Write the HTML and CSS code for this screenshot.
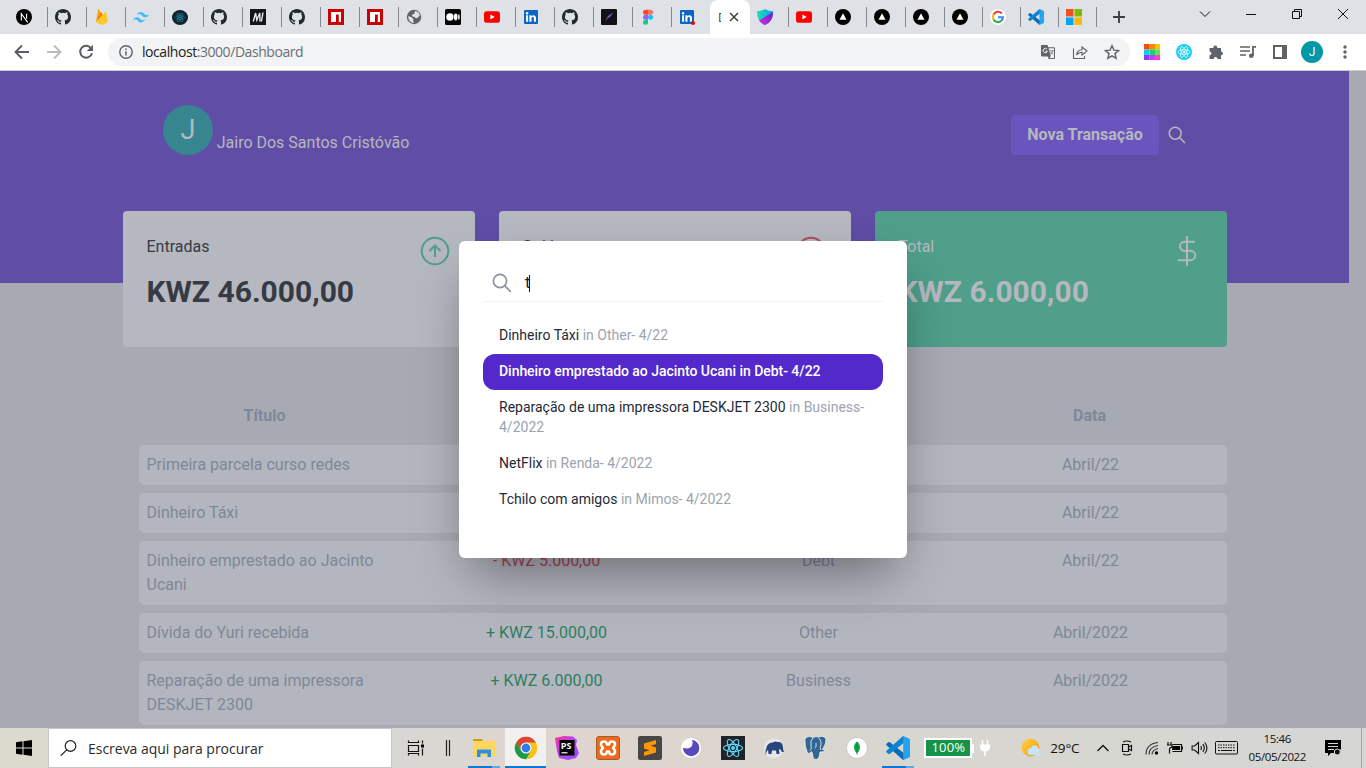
FILE: index.html
```html
<!DOCTYPE html>
<html lang="pt">
<head>
<meta charset="utf-8">
<title>Dashboard</title>
<link rel="stylesheet" href="styles.css">
</head>
<body>
<svg class="defs" width="0" height="0">
  <defs>
    <linearGradient id="shieldA" x1="0" y1="0" x2="1" y2="0"><stop offset="0" stop-color="#17e0b0"/><stop offset="1" stop-color="#1b9cf5"/></linearGradient>
    <linearGradient id="shieldB" x1="0" y1="1" x2="1" y2="0"><stop offset="0" stop-color="#e12be0"/><stop offset="1" stop-color="#5a1fc9"/></linearGradient>
    <linearGradient id="psG" x1="0" y1="0" x2="1" y2="1"><stop offset="0" stop-color="#ff318c"/><stop offset=".45" stop-color="#b345f1"/><stop offset="1" stop-color="#9a4df5"/></linearGradient>
    <linearGradient id="sunG" x1="0" y1="0" x2="1" y2="1"><stop offset="0" stop-color="#ffd23c"/><stop offset="1" stop-color="#f49a1d"/></linearGradient>
  </defs>
  <symbol id="next" viewBox="0 0 16 16"><circle cx="8" cy="8" r="8"/><path d="M5.3 11.5V4.7l6.4 8.6M10.6 4.7v5" fill="none" stroke="#fff" stroke-width="1.1"/></symbol>
  <symbol id="github" viewBox="0 0 16 16"><path fill="#24292f" d="M8 0C3.58 0 0 3.58 0 8c0 3.54 2.29 6.53 5.47 7.59.4.07.55-.17.55-.38 0-.19-.01-.82-.01-1.49-2.01.37-2.53-.49-2.69-.94-.09-.23-.48-.94-.82-1.13-.28-.15-.68-.52-.01-.53.63-.01 1.08.58 1.23.82.72 1.21 1.87.87 2.33.66.07-.52.28-.87.51-1.07-1.78-.2-3.64-.89-3.64-3.95 0-.87.31-1.59.82-2.15-.08-.2-.36-1.02.08-2.12 0 0 .67-.21 2.2.82a7.6 7.6 0 0 1 4 0c1.53-1.04 2.2-.82 2.2-.82.44 1.1.16 1.92.08 2.12.51.56.82 1.27.82 2.15 0 3.07-1.87 3.75-3.65 3.95.29.25.54.73.54 1.48 0 1.07-.01 1.93-.01 2.2 0 .21.15.46.55.38A8.01 8.01 0 0 0 16 8c0-4.42-3.58-8-8-8z"/></symbol>
  <symbol id="firebase" viewBox="0 0 16 16"><path fill="#ffa000" d="M2 13 4.2.3c.1-.4.5-.4.7-.1L7.3 4.600z"/><path fill="#f57c00" d="m2 13 7-6.500L7.400 3.400c-.2-.3-.5-.3-.6 0z"/><path fill="#ffca28" d="M14 13 12.300 2.900c-.1-.3-.4-.4-.6-.2L2 13l5.500 2.900c.3.1.7.1 1 0z"/></symbol>
  <symbol id="tailwind" viewBox="0 0 16 16"><path fill="#38bdf8" d="M8 3Q4.800 3 4 6.300q1.200-1.600 2.800-1.200c.9.2 1.500.9 2.300 1.600Q10.400 8.200 12 8.200q3.200 0 4-3.300-1.200 1.600-2.800 1.200c-.9-.2-1.500-.9-2.300-1.600Q9.700 3 8 3zM4 8.200q-3.200 0-4 3.300 1.200-1.600 2.800-1.200c.9.2 1.500.9 2.300 1.600 1.100 1.200 1.900 1.500 2.900 1.500q3.200 0 4-3.300-1.200 1.600-2.800 1.200c-.9-.2-1.500-.9-2.300-1.600Q5.700 8.200 4 8.200z"/></symbol>
  <symbol id="atom" viewBox="-12 -12 24 24"><circle r="2.100" fill="currentColor"/><g fill="none" stroke="currentColor" stroke-width="1.200"><ellipse rx="10.500" ry="4"/><ellipse rx="10.500" ry="4" transform="rotate(60)"/><ellipse rx="10.500" ry="4" transform="rotate(120)"/></g></symbol>
  <symbol id="mtab" viewBox="0 0 16 16"><rect width="16" height="16" fill="#15151c"/><path d="M3.300 12.500 5.600 4l1.200 7L9.800 4l.2 8.500M13 3.500l-1.600 9" fill="none" stroke="#e8e8ee" stroke-width="1.400"/></symbol>
  <symbol id="npm" viewBox="0 0 16 16"><path fill="#cb0000" d="M0 0h16v16H0z"/><path fill="#fff" d="M3 3h10v10h-2.200V5.500H8V13H3z"/></symbol>
  <symbol id="globe" viewBox="0 0 16 16"><circle cx="8" cy="8" r="7.200" fill="#5f6368"/><path fill="#dee1e6" d="M2.300 7 5.500 8.200l2 1.800-.5 1.500 1 2.500C4.500 14 2 11 2.300 7zM9 2.100c2.500.3 4.300 1.800 4.900 4.200L12 8.500 10 9.500 8.500 8 6 7.200 6.200 5.500l2-.5z"/></symbol>
  <symbol id="medium" viewBox="0 0 16 16"><rect width="16" height="16" rx="1.500"/><g fill="#fff"><circle cx="4.900" cy="8" r="3.700"/><ellipse cx="10.700" cy="8" rx="1.800" ry="3.400"/><ellipse cx="13.900" cy="8" rx=".8" ry="3"/></g></symbol>
  <symbol id="youtube" viewBox="0 0 16 16"><rect y="2.300" width="16" height="11.400" rx="2.800" fill="#f00"/><path fill="#fff" d="M6.400 5.600v4.800L10.600 8z"/></symbol>
  <symbol id="linkedin" viewBox="0 0 16 16"><rect x="1" y="1" width="14" height="14" rx="1" fill="#0a66c2"/><path fill="#fff" d="M3.100 6.300h2v6.500h-2zM6.400 6.300h2v.9c1.100-1.700 4.600-1.400 4.600 1.700v3.900h-2.100V9.400c0-1.900-2.400-1.800-2.400 0v3.400H6.400z"/><circle cx="4.100" cy="4.200" r="1.200" fill="#fff"/></symbol>
  <symbol id="quill" viewBox="0 0 16 16"><rect width="16" height="16" rx="1" fill="#121214"/><path d="m4 13 3-6 5-3.500-2.500 4L7 9z" fill="#8257e5"/></symbol>
  <symbol id="figma" viewBox="0 0 16 16"><path fill="#f24e1e" d="M8 .8H5.500a2.500 2.500 0 0 0 0 5H8z"/><path fill="#ff7262" d="M8 .8h2.500a2.500 2.500 0 0 1 0 5H8z"/><path fill="#a259ff" d="M8 5.800H5.500a2.500 2.500 0 0 0 0 5H8z"/><circle cx="10.500" cy="8.300" r="2.500" fill="#1abcfe"/><path fill="#0acf83" d="M8 10.800H5.500A2.500 2.500 0 1 0 8 13.300z"/></symbol>
  <symbol id="shield" viewBox="0 0 16 16"><path fill="url(#shieldA)" d="M8 0q4 2.300 8 2.300Q16 13 8 16 0 13 0 2.300 4 2.300 8 0z"/><path fill="url(#shieldB)" d="M16 3q0 10-8 13-4-1.500-6-4.500z"/></symbol>
  <symbol id="vercel" viewBox="0 0 16 16"><circle cx="8" cy="8" r="8"/><path fill="#fff" d="m8 4.300 3.500 6.400h-7z"/></symbol>
  <symbol id="google" viewBox="0 0 16 16"><circle cx="8" cy="8" r="8" fill="#fff"/><g fill="none" stroke-width="2.100"><path stroke="#ea4335" d="M3.500 5.600a5 5 0 0 1 8.300-1.100"/><path stroke="#fbbc05" d="M3.500 10.400a5 5 0 0 1 0-4.800"/><path stroke="#34a853" d="M11.200 11.900a5 5 0 0 1-7.700-1.500"/><path stroke="#4285f4" d="M8 8.200h5a5 5 0 0 1-1.800 3.700"/></g></symbol>
  <symbol id="vscode" viewBox="0 0 24 24"><path fill="#0a6cb8" d="M.5 7.800 2.300 6.300q.8-.5 1.600 0L18 17.200V24q-.8 0-1.500-.6L.5 9.200q-.7-.7 0-1.400z"/><path fill="#0b84d2" d="M.5 16.200 2.300 17.700q.8.500 1.600 0L18 6.800V0q-.8 0-1.500.6L.5 14.800q-.7.700 0 1.400z"/><path fill="#27a3ee" d="m17.500 0 5.500 2.500q1 .5 1 1.500v16q0 1-1 1.500L17.500 24q-.8 0-.3-2V2q-.5-2 .3-2z"/></symbol>
  <symbol id="mslogo" viewBox="0 0 15 15"><path fill="#f25022" d="M0 0h7v7H0z"/><path fill="#7fba00" d="M8 0h7v7H8z"/><path fill="#00a4ef" d="M0 8h7v7H0z"/><path fill="#ffb900" d="M8 8h7v7H8z"/></symbol>
  <symbol id="lens" viewBox="0 0 20 20"><g fill="none" stroke="currentColor" stroke-width="1.700"><circle cx="8" cy="8" r="6.600"/><path d="m12.800 12.800 6 6"/></g></symbol>
</svg>

<header class="browser">
  <div class="tabstrip">
    <div class="tab"><svg><use href="#next"/></svg></div>
    <div class="tab"><svg><use href="#github"/></svg></div>
    <div class="tab"><svg><use href="#firebase"/></svg></div>
    <div class="tab"><svg><use href="#tailwind"/></svg></div>
    <div class="tab"><svg class="react-dark"><use href="#atom"/></svg></div>
    <div class="tab"><svg><use href="#github"/></svg></div>
    <div class="tab"><svg><use href="#mtab"/></svg></div>
    <div class="tab"><svg><use href="#github"/></svg></div>
    <div class="tab"><svg><use href="#npm"/></svg></div>
    <div class="tab"><svg><use href="#npm"/></svg></div>
    <div class="tab"><svg><use href="#globe"/></svg></div>
    <div class="tab"><svg><use href="#medium"/></svg></div>
    <div class="tab"><svg><use href="#youtube"/></svg></div>
    <div class="tab"><svg><use href="#linkedin"/></svg></div>
    <div class="tab"><svg><use href="#github"/></svg></div>
    <div class="tab"><svg><use href="#quill"/></svg></div>
    <div class="tab"><svg><use href="#figma"/></svg></div>
    <div class="tab tab-last"><svg><use href="#linkedin"/></svg><i class="dot"></i></div>
    <div class="tab-active"><span class="tab-title">D</span><svg viewBox="0 0 10 10" width="10" height="10"><path d="m1 1 8 8M9 1 1 9" stroke="#3c4043" stroke-width="1.500"/></svg></div>
    <div class="tab"><svg><use href="#shield"/></svg></div>
    <div class="tab"><svg><use href="#youtube"/></svg></div>
    <div class="tab"><svg><use href="#vercel"/></svg></div>
    <div class="tab"><svg><use href="#vercel"/></svg></div>
    <div class="tab"><svg><use href="#vercel"/></svg></div>
    <div class="tab tab-narrow"><svg><use href="#vercel"/></svg></div>
    <div class="tab tab-narrow"><svg><use href="#google"/></svg></div>
    <div class="tab tab-narrow"><svg><use href="#vscode"/></svg></div>
    <div class="tab tab-narrow"><svg><use href="#mslogo"/></svg></div>
    <svg class="plus" viewBox="0 0 12 12"><path d="M6 0v12M0 6h12" stroke="#3c4043" stroke-width="1.900"/></svg>
    <div class="winctl">
      <svg viewBox="0 0 12 12"><path d="m1 3.500 5 5 5-5" fill="none" stroke="#111"/></svg>
      <svg viewBox="0 0 12 12"><path d="M1 6.500h10" stroke="#111"/></svg>
      <svg viewBox="0 0 12 12"><path d="M1.500 3.500h7v7h-7zM3.500 3.500v-2h7v7h-2" fill="none" stroke="#111"/></svg>
      <svg viewBox="0 0 12 12"><path d="m1 1 10 10M11 1 1 11" stroke="#111"/></svg>
    </div>
  </div>
  <div class="toolbar">
    <div class="nav">
      <svg viewBox="0 0 16 16"><path d="M15 8H2M8 1.500 1.500 8 8 14.500" fill="none" stroke="#5a5e63" stroke-width="1.900"/></svg>
      <svg viewBox="0 0 16 16"><path d="M1 8h13M8 1.500 14.500 8 8 14.500" fill="none" stroke="#babcbe" stroke-width="1.900"/></svg>
      <svg viewBox="0 0 16 16"><path d="M13.200 4.400A6 6 0 1 0 14 9.200" fill="none" stroke="#5a5e63" stroke-width="2"/><path fill="#5a5e63" d="M15 .8v6.200H8.800z"/></svg>
    </div>
    <div class="omnibox">
      <svg class="info" viewBox="0 0 14 14"><circle cx="7" cy="7" r="6.200" fill="none" stroke="#5f6368" stroke-width="1.400"/><path d="M7 6.200v4.300M7 3.500V5" stroke="#5f6368" stroke-width="1.500"/></svg>
      <span class="url"><b>localhost</b>:3000/Dashboard</span>
      <svg viewBox="0 0 16 16"><path fill="#5f6368" d="M1.500 1h6l.7 2.200h5.600q1.200 0 1.200 1.200v9.400q0 1.200-1.200 1.200H8.500L7.800 12.500H2.500Q1 12.500 1 11V2q0-1 .5-1z"/><path fill="#f1f3f4" d="M8.600 4.200H14V14H9.300l1.500-1.700z"/><path d="M7 5.200a2.200 2.200 0 1 0 .4 2H5.300" fill="none" stroke="#f1f3f4"/><path d="M9.600 6.800h4.200M12.900 7c-.4 1.600-1.500 2.700-2.600 3.300M10.500 8l2.500 2.500" fill="none" stroke="#5f6368" stroke-width=".8"/></svg>
      <svg viewBox="0 0 16 16"><path d="M1.500 4.500v10h11v-2.500M4.500 11q.6-5 5.500-5.200V3l5 4-5 4V8.200Q6.500 8.200 4.500 11z" fill="none" stroke="#5f6368" stroke-width="1.100"/></svg>
      <svg viewBox="0 0 16 16"><path d="m8 1.700 1.900 4.400 4.700.4-3.600 3.100 1.100 4.700L8 11.800l-4.100 2.500L5 9.600 1.400 6.500l4.700-.4z" fill="none" stroke="#5f6368" stroke-width="1.400"/></svg>
    </div>
    <div class="exts">
      <svg viewBox="0 0 16 16"><path fill="#ff4b00" d="M0 0h5.500v5.500H0z"/><path fill="#ff8400" d="M5.500 0H11v5.500H5.500z"/><path fill="#ffc400" d="M11 0h5v5.500h-5z"/><path fill="#18c8f0" d="M0 5.500h5.500V11H0z"/><path fill="#12d66a" d="M5.500 5.500H11V11H5.500z"/><path fill="#68e052" d="M11 5.500h5V11h-5z"/><path fill="#8a3cff" d="M0 11h5.500v5H0z"/><path fill="#c63cff" d="M5.500 11H11v5H5.500z"/><path fill="#ff3cc8" d="M11 11h5v5h-5z"/></svg>
      <svg class="react-light"><use href="#atom"/></svg>
      <svg viewBox="0 0 16 16"><path fill="#5f6368" d="M1.500 4h4a1.900 1.900 0 1 1 3.600 0H13v3.500a1.900 1.900 0 1 1 0 3.800V15H9.500a1.900 1.900 0 1 0-3.800 0H1.500v-3.700a1.900 1.900 0 1 0 0-3.800z"/></svg>
      <svg viewBox="0 0 16 16"><path d="M0 3h10M0 7h10M0 11h6" stroke="#5f6368" stroke-width="1.600"/><path d="M16 2.800h-3V12" fill="none" stroke="#5f6368" stroke-width="1.800"/><circle cx="11.300" cy="11.800" r="2.300" fill="#5f6368"/></svg>
      <svg viewBox="0 0 16 16"><path fill="#5f6368" fill-rule="evenodd" d="M1 1h14v14H1zm2 2v10h7V3z"/></svg>
      <span class="profile">J</span>
      <svg class="kebab" viewBox="0 0 16 16"><g fill="#5f6368"><circle cx="8" cy="3" r="1.700"/><circle cx="8" cy="8" r="1.700"/><circle cx="8" cy="13" r="1.700"/></g></svg>
    </div>
  </div>
</header>

<main class="viewport">
  <div class="page">
    <section class="hero">
      <div class="user"><span class="avatar">J</span><span class="name">Jairo Dos Santos Cristóvão</span></div>
      <div class="actions"><button class="new">Nova Transação</button><svg class="hero-search"><use href="#lens"/></svg></div>
    </section>
    <section class="cards">
      <article class="card">
        <div class="card-head"><span>Entradas</span><svg viewBox="0 0 30 30"><g fill="none" stroke="#4f9f8a" stroke-width="2"><circle cx="15" cy="15" r="13.300"/><path d="M15 21V9.500M9.500 15 15 9.500l5.500 5.500"/></g></svg></div>
        <strong>KWZ 46.000,00</strong>
      </article>
      <article class="card">
        <div class="card-head"><span>Saídas</span><svg viewBox="0 0 30 30"><g fill="none" stroke="#b24a63" stroke-width="2"><circle cx="15" cy="15" r="13.300"/><path d="M15 9v11.500M9.500 15l5.500 5.500 5.500-5.500"/></g></svg></div>
      </article>
      <article class="card card-total">
        <div class="card-head"><span>Total</span><svg viewBox="0 0 30 30"><path d="M15 0v30M22 5.800h-9.500a4.500 4.500 0 0 0 0 9h6a4.700 4.700 0 0 1 0 9.400H6.500" fill="none" stroke="#b5b8bf" stroke-width="1.900" stroke-linecap="round"/></svg></div>
        <strong>KWZ 6.000,00</strong>
      </article>
    </section>
    <section class="table">
      <div class="thead"><span>Título</span><span></span><span></span><span>Data</span></div>
      <div class="row"><span>Primeira parcela curso redes</span><span></span><span></span><span>Abril/22</span></div>
      <div class="row"><span>Dinheiro Táxi</span><span></span><span></span><span>Abril/22</span></div>
      <div class="row"><span>Dinheiro emprestado ao Jacinto Ucani</span><span class="neg">- KWZ 5.000,00</span><span>Debt</span><span>Abril/22</span></div>
      <div class="row"><span>Dívida do Yuri recebida</span><span class="pos">+ KWZ 15.000,00</span><span>Other</span><span>Abril/2022</span></div>
      <div class="row"><span>Reparação de uma impressora DESKJET 2300</span><span class="pos">+ KWZ 6.000,00</span><span>Business</span><span>Abril/2022</span></div>
    </section>
  </div>
  <div class="modal">
    <div class="search"><svg><use href="#lens"/></svg><span>t</span><i class="caret"></i></div>
    <ul class="results">
      <li>Dinheiro Táxi <em>in Other- 4/22</em></li>
      <li class="active">Dinheiro emprestado ao Jacinto Ucani <em>in Debt- 4/22</em></li>
      <li>Reparação de uma impressora DESKJET 2300 <em>in Business- 4/2022</em></li>
      <li>NetFlix <em>in Renda- 4/2022</em></li>
      <li>Tchilo com amigos <em>in Mimos- 4/2022</em></li>
    </ul>
  </div>
</main>

<footer class="taskbar">
  <div class="start"><svg viewBox="0 0 16 16"><path d="M0 2.200 6.500 1.300v6.200H0zM7.500 1.200 16 0v7.500H7.500zM0 8.500h6.500v6.200L0 13.800zM7.500 8.500H16V16l-8.500-1.200z"/></svg></div>
  <div class="tsearch"><svg viewBox="0 0 16 16"><g fill="none" stroke="#222" stroke-width="1.200"><circle cx="10" cy="6" r="5.300"/><path d="M6.200 9.800.3 15.700"/></g></svg><span>Escreva aqui para procurar</span></div>
  <div class="tcell taskview"><svg viewBox="0 0 18 16"><path d="M1.500.5v2h10v-2M1.500 15.500v-2h10v2M1.500 5.500h10v6h-10zM15.500.5v3M15.500 8.500v7" fill="none" stroke="#111" stroke-width="1.200"/><path d="M14 4.500h3v3h-3z"/></svg></div>
  <div class="tcell bars"><svg viewBox="0 0 6 16"><path d="M1.500 0v16M4.500 0v16" stroke="#222" stroke-width="1.200"/></svg></div>
  <div class="apps">
    <div class="app running"><svg viewBox="0 0 24 24"><path fill="#d9980b" d="M1 4q0-1 1-1h8l1 2.500H1z"/><path fill="#ffd75e" d="M1 5h9.500l1-.5H22q1 0 1 1V20H1z"/><path fill="#2f8de4" d="M5 21v-6.500q0-1 1-1h12q1 0 1 1V21h-3.500v-3.500h-7V21z"/></svg></div>
    <div class="app current"><svg viewBox="-12 -12 24 24"><circle r="11.200" fill="#fbc116"/><path fill="#db4437" d="M0-5.500H9.800A11.200 11.200 0 0 0-9.700-5.600L-4.800 2.800z"/><path fill="#1a9c50" d="M-9.700-5.600A11.200 11.200 0 0 0 0 11.200L4.800 2.800 0 5.500-4.800 2.800z"/><circle r="5.500" fill="#fff"/><circle r="4.400" fill="#2b7de9"/></svg></div>
    <div class="app"><svg viewBox="0 0 24 24"><path fill="url(#psG)" d="m0 2 9-2 9 .5L22 4l-1 5 3 8-3 5-8 2-9-2-2-7z"/><path d="M4.500 4h15v15.500h-15z"/><text x="5.800" y="12.500" class="pstext">PS</text><path fill="#fff" d="M6.500 16.200h6v1.200h-6z"/></svg></div>
    <div class="app"><svg viewBox="0 0 24 24"><rect x=".5" y=".5" width="23" height="23" rx="2.500" fill="#ec6b1d" stroke="#a9562a"/><path d="M8.500 5.500q-4 0-3.500 3 .3 1.500 2 3.500-2 1.500-2 3.500 0 3 3.500 3 2 0 2.500-3h2q.5 3 2.500 3 3.500 0 3.500-3 0-2-2-3.500 1.700-2 2-3.500.5-3-3.500-3-2 0-2.500 3h-2q-.5-3-2.500-3z" fill="none" stroke="#fff" stroke-width="2.500" stroke-linejoin="round"/></svg></div>
    <div class="app"><svg viewBox="0 0 24 24"><rect width="24" height="24" rx="2" fill="#474747"/><path fill="#ff9800" d="M6 7.500 18 4v4L12.500 9.700 18 11.500v5L6 20v-4l5.500-1.700L6 12.500z"/></svg></div>
    <div class="app"><svg viewBox="0 0 24 24"><circle cx="12" cy="12" r="10" fill="#fff"/><path fill="#5849be" d="M13 3.800a8.200 8.200 0 1 1-9 8q5.500 1.800 8.300-1Q14.500 8 13 3.800z"/></svg></div>
    <div class="app"><svg class="react-square"><use href="#atom"/></svg></div>
    <div class="app"><svg viewBox="0 0 24 24"><circle cx="12" cy="12.500" r="10" fill="#e6e7e9"/><path fill="#28467b" d="M3.500 19q-.5-5 1.500-9 2-4 6-3.500 2-1.500 4.500-.5 5-.5 5.500 5 0 3 1 4.500-2 1.500-3-1-.5-2-2-1l.5 4.500h-3l-.5-3.500H10l-.5 3.500h-3L6 13.500q-1.500 2-2.500 5.500z"/></svg></div>
    <div class="app"><svg viewBox="0 0 24 24"><path fill="#336791" stroke="#f1f1f1" stroke-width=".8" d="M2 3q3-4 8-1.500Q13 0 15.500 1q5.500-2 7.500 2 .5 4.500-3.500 10.500 3 0 2.500 1-2 2-5 1.500-.5 7-3.500 7.500-4 .5-4-6l-1-2q-3 4-4.500 0Q1.500 10 2 3z"/><path d="M10 2q-3 3-2 7 1 4-1 5.500M15.500 1.500q3.500 4 2.500 7-1 3-.3 5.500M11.500 12q2.500-.5 1.500-5" fill="none" stroke="#e5eaf0" stroke-width=".9"/></svg></div>
    <div class="app"><svg viewBox="0 0 24 24"><circle cx="12" cy="12" r="10.500" fill="#fff" stroke="#bbb" stroke-width=".7"/><path fill="#10aa50" d="M12 5.500q3.500 3 3 6.800-.4 3-3 4.900-2.600-1.900-3-4.900-.5-3.800 3-6.800z"/><path d="M12 6v12.500" stroke="#08743c" stroke-width=".8"/></svg></div>
    <div class="app running"><svg><use href="#vscode"/></svg></div>
  </div>
  <div class="tray">
    <span class="charge">100%</span>
    <i class="nub"></i>
    <svg class="plug" viewBox="0 0 10 16"><path d="M2.500 0v5M7.500 0v5M5 10v6" stroke="#fff" stroke-width="1.500"/><path fill="#fff" d="M0 4.500h10V8q-1 3.500-5 3.500T0 8z"/></svg>
    <svg class="weather" viewBox="0 0 20 20"><circle cx="9.500" cy="9.500" r="9" fill="url(#sunG)"/><path fill="#c4e4fa" d="M10 17a3.500 3.500 0 0 1 0-7q1.500-3.500 5-2.500 2 .8 2.300 3.200 2.700.5 2.700 3.200 0 3.100-3 3.100z"/></svg>
    <span class="temp">29°C</span>
    <svg class="chev" viewBox="0 0 12 12"><path d="m.5 9 5.500-5.500L11.500 9" fill="none" stroke="#111" stroke-width="1.300"/></svg>
    <svg class="cam" viewBox="0 0 12 16"><path d="M1.500 4.500h6v7h-6zM7.500 7l3-1.500v5l-3-1.500M2 2Q6 0 10 2M2 14q4 2 8 0" fill="none" stroke="#111" stroke-width="1.200"/></svg>
    <svg class="wifi" viewBox="0 0 14 14"><path d="M1 13.500Q1 3 13 1.500M4 13.500Q4 6 13 4.500M7 13.500Q7 9 13 7.500" fill="none" stroke="#333" stroke-width="1.100"/><circle cx="11.500" cy="12" r="1.700"/></svg>
    <svg class="bat" viewBox="0 0 16 14"><path d="M5.500 3.500h9v7h-9M15.500 5.500v3M1 1v3M4 1v3M0 4h5v2.500H3.500L2.500 8v4.500" fill="none" stroke="#111" stroke-width="1.200"/><path d="M5.500 5h7.500v4H5z"/></svg>
    <svg class="vol" viewBox="0 0 16 14"><path d="M.6 5v4h2.500L7 12.500v-11L3.100 5zM9.200 5q1.500 2 0 4M11.300 3.200q3 3.800 0 7.600M13.300 1.500q4.300 5.500 0 11" fill="none" stroke="#111" stroke-width="1.100"/></svg>
    <svg class="kbd" viewBox="0 0 23 14"><rect x=".5" y=".5" width="22" height="12.500" rx="1" fill="none" stroke="#111"/><path d="M3 4h17M3 6.700h17" stroke="#111" stroke-dasharray="1.500 1"/><path d="M3 9.500h2M6 9.500h11M18 9.500h2" stroke="#111"/></svg>
    <div class="clock"><span>15:46</span><span>05/05/2022</span></div>
    <svg class="notif" viewBox="0 0 16 16"><path d="M0 0h16v9l-4 4H6l-3 3v-3H0z"/><path d="M3 3.500h10M3 6.500h10M3 9.500h6" stroke="#d8d8d4" stroke-width="1.200"/><circle cx="12.300" cy="12" r="3" fill="#111" stroke="#d8d8d4"/></svg>
    <i class="peek"></i>
  </div>
</footer>
</body>
</html>
```
FILE: styles.css
```css
* { box-sizing: border-box; }
body { margin: 0; width: 1366px; height: 768px; overflow: hidden; display: flex; flex-direction: column; font-family: Roboto, sans-serif; }
svg { display: block; flex: none; }
.defs { position: absolute; }

/* browser chrome */
.browser { height: 71px; flex: none; background: #fff; border-bottom: 1px solid #c9cbd0; }
.tabstrip { height: 34px; background: #dee1e6; display: flex; padding-left: 9px; }
.tab { width: 39px; position: relative; display: flex; align-items: center; padding-left: 7px; background: linear-gradient(#85888c, #85888c) right 0 top 7px / 1px 20px no-repeat; }
.tab svg { width: 16px; height: 16px; }
.tab-narrow { width: 38px; }
.tab-last { width: 38px; background: none; }
.tab .dot { position: absolute; left: 19px; top: 21px; width: 4px; height: 4px; border-radius: 2px; background: #e00; }
.tab .react-dark { background: #10222b; border-radius: 50%; color: #1c93ad; padding: 2px; height: 15px; }
.tab-active { width: 40px; background: #fff; border-radius: 8px 8px 0 0; display: flex; align-items: center; gap: 8px; padding-left: 8px; }
.tab-title { width: 3px; overflow: hidden; font: 12px "Open Sans", sans-serif; color: #3c4043; }
.plus { width: 12px; height: 12px; margin: 11px 0 0 16px; }
.winctl { display: flex; gap: 34px; margin: 8px 0 0 74px; }
.winctl svg { width: 12px; height: 12px; }
.toolbar { height: 36px; display: flex; align-items: center; padding-left: 14px; }
.nav { display: flex; gap: 16px; }
.nav svg { width: 16px; height: 16px; }
.omnibox { width: 1022px; height: 28px; margin-left: 14px; background: #f1f3f4; border-radius: 14px; display: flex; align-items: center; gap: 16px; padding: 0 10px 0 11px; }
.omnibox svg { width: 16px; height: 16px; }
.omnibox .info { width: 14px; height: 14px; }
.url { flex: 1; margin-left: -7px; margin-top: -1px; font: 14px "Open Sans", sans-serif; letter-spacing: -.44px; color: #6b6f74; }
.url b { font-weight: 400; color: #202124; }
.exts { display: flex; align-items: center; gap: 16px; margin-left: 14px; }
.exts svg { width: 16px; height: 16px; }
.exts .react-light { color: #fff; background: #15cdf5; border-radius: 50%; padding: 1px; }
.profile { width: 22px; height: 22px; margin: 0 -3px; border-radius: 50%; background: #0097a7; color: #fff; font-size: 12px; line-height: 22px; text-align: center; }
.exts .kebab { margin-left: 1px; }

/* dashboard under the dimming backdrop */
.viewport { height: 657px; flex: none; position: relative; background: #a7aab2; overflow: hidden; }
.page { width: 1349px; }
.hero { height: 212px; background: #5f4da6; display: flex; justify-content: space-between; align-items: flex-start; padding: 34px 162px 0 163px; }
.user { display: flex; align-items: flex-start; gap: 4px; color: #b5b8bf; font-size: 16px; }
.avatar { width: 50px; height: 50px; border-radius: 50%; background: #37868f; font-size: 27px; line-height: 50px; text-align: center; }
.name { line-height: 24px; margin-top: 26px; margin-left: -.3px; }
.actions { display: flex; align-items: center; margin-top: 10px; gap: 8px; }
.new { width: 148px; height: 40px; border: 0; border-radius: 4px; background: #6a54be; color: #b5b8bf; font: 700 16px Roboto, sans-serif; padding: 0 0 2px; }
.hero-search { width: 20px; height: 20px; padding: 1px; color: #b5b8bf; }
.cards { display: grid; grid-template-columns: repeat(3, 352px); gap: 24px; margin: -72px 0 0 123px; }
.card { height: 136px; border-radius: 4px; background: #b5b8bf; color: #363a45; padding: 24px 24px 24px 23.5px; }
.card-head { display: flex; justify-content: space-between; font-size: 16px; line-height: 24px; height: 32px; }
.card-head svg { width: 30px; height: 30px; margin: 1px 1px 0 0; }
.card strong { display: block; margin-top: 1px; font-size: 30px; line-height: 48px; font-weight: 700; }
.card-total { background: #4f9f8a; color: #b5b8bf; }
.table { margin: 57px 0 0 139px; width: 1088px; color: #808799; font-size: 16px; line-height: 24px; }
.thead { display: grid; grid-template-columns: repeat(4, 1fr); margin-left: -12px; font-weight: 700; text-align: center; height: 24px; margin-bottom: 17px; }
.row { display: grid; grid-template-columns: repeat(4, 1fr); background: #b3b6be; border-radius: 5px; margin-bottom: 8px; text-align: center; }
.row span { padding: 8px 8.500px 8px 7.500px; }
.row span:first-child { text-align: left; }
.row .neg { color: #a8475a; }
.row .pos { color: #2f7d5c; }

/* search dialog */
.modal { position: absolute; left: 459px; top: 170px; width: 448px; height: 317px; background: #fff; border-radius: 6px; padding: 24px; box-shadow: 0 25px 50px -12px rgba(0, 0, 0, .42); }
.search { height: 37px; border-bottom: 1px solid #f3f4f6; display: flex; align-items: center; padding-left: 9px; font-size: 16px; color: #111827; }
.search svg { width: 20px; height: 20px; color: #8d93a1; margin-right: 13px; }
.search span { width: 4px; margin-top: -2px; }
.caret { width: 1px; height: 17px; background: #111827; }
.results { list-style: none; margin: 16px 0 0; padding: 0; font-size: 14px; line-height: 20px; color: #1f2937; }
.results li { padding: 7px 16px 9px; border-radius: 12px; }
.results em { font-style: normal; color: #9ca3af; }
.results .active { background: #5429cc; }
.results .active, .results .active em { color: #fff; font-weight: 500; letter-spacing: -.04px; }

/* taskbar */
.taskbar { height: 40px; flex: none; display: flex; background: linear-gradient(90deg, #dcd9ce, #d9d7d3 30%, #dfd5ce 43%, #d8d6d0 65%, #d5d6d3); font-family: "Open Sans", sans-serif; color: #111; }
.start { width: 48px; display: flex; align-items: center; justify-content: center; }
.start svg { width: 16px; height: 16px; }
.tsearch { width: 344px; background: #fff; border: 1px solid #c7c7c7; display: flex; align-items: center; gap: 11px; padding-left: 11px; font-size: 14px; letter-spacing: -.02px; color: #2b2b2b; }
.tsearch svg { width: 17px; height: 16px; }
.tcell { display: flex; align-items: center; justify-content: center; }
.taskview { width: 48px; }
.taskview svg { width: 18px; height: 16px; }
.bars { width: 16px; }
.bars svg { width: 6px; height: 16px; }
.apps { display: flex; margin-left: 7.5px; }
.app { width: 41.4px; display: flex; align-items: center; justify-content: center; }
.app svg { width: 24px; height: 24px; }
.running { background: linear-gradient(90deg, #0f78d4 75%, #62a8e5 75%) center bottom / 32px 2px no-repeat; }
.current { background: linear-gradient(#0f78d4, #0f78d4) bottom / 100% 2px no-repeat #f2f0ec; }
.app .react-square { background: #20232a; color: #61dafb; padding: 1px; }
.pstext { font: 700 9px "Open Sans", sans-serif; fill: #fff; }
.tray { display: flex; align-items: center; flex: 1; margin-left: 5.5px; }
.charge { width: 48px; height: 20px; background: #159447; border: 2px solid #fff; color: #fff; font-size: 13px; line-height: 15px; text-align: center; letter-spacing: .1px; }
.nub { width: 2px; height: 9px; background: #fff; }
.plug { width: 10px; height: 16px; margin-left: 6px; }
.weather { width: 20px; height: 20px; margin-left: 31px; }
.temp { width: 30px; margin-left: 9px; font-size: 13.5px; letter-spacing: -.15px; white-space: nowrap; }
.chev { width: 12px; height: 12px; margin-left: 17px; }
.cam { width: 12px; height: 16px; margin-left: 12px; }
.wifi { width: 14px; height: 14px; margin-left: 12px; }
.bat { width: 16px; height: 14px; margin-left: 8px; }
.vol { width: 17px; height: 14px; margin-left: 8px; }
.kbd { width: 23px; height: 14px; margin-left: 7px; }
.clock { width: 60px; margin-left: 9px; display: flex; flex-direction: column; align-items: center; font-size: 11.5px; line-height: 18px; letter-spacing: -.35px; }
.notif { width: 16px; height: 16px; margin-left: 18px; }
.peek { width: 1px; height: 40px; margin-left: 20px; background: #a6a6a4; }
```
